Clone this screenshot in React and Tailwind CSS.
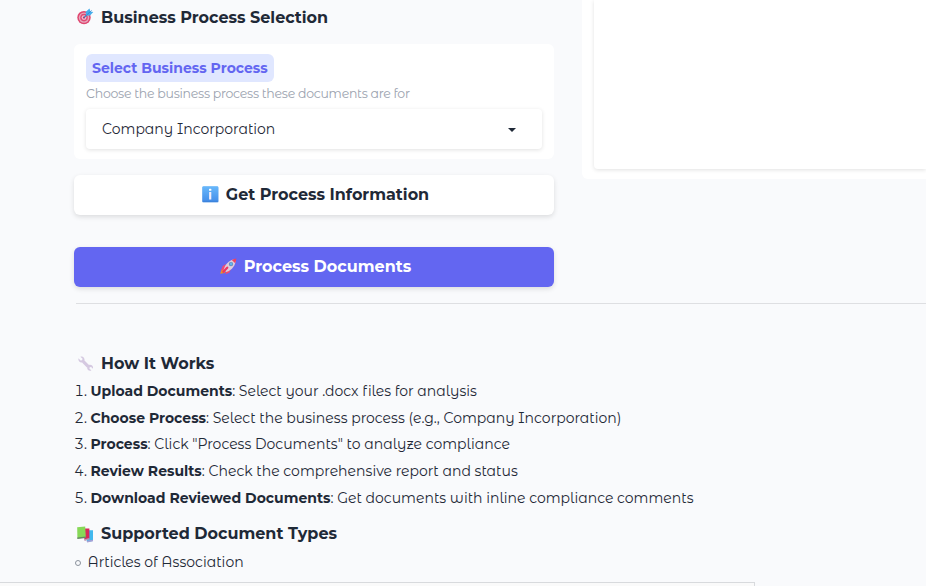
const Target = () => (
  <svg className="-mt-0.5 h-[17px] w-[17px] shrink-0" viewBox="0 0 17 17">
    <circle cx="7" cy="9.6" r="6.7" fill="#df4670" />
    <circle cx="7" cy="9.6" r="5.2" fill="#e6a9bd" />
    <circle cx="7" cy="9.6" r="3.8" fill="#df4b76" />
    <circle cx="7" cy="9.6" r="2.4" fill="#edbfd0" />
    <circle cx="7" cy="9.6" r="1.1" fill="#cc2c60" />
    <path d="M7 9.6L12.1 4.6" stroke="#307fbd" strokeWidth="1.2" />
    <path d="M9.1 7.6L8.6 3.9 12.5.6l.8 2.8 3 .7-3.3 3.5z" fill="#45adeb" />
    <path d="M9.6 7.1L14.6 2.4" stroke="#2b83cf" strokeWidth=".8" />
  </svg>
);

const Info = () => (
  <svg className="-mt-px h-[17px] w-[17px] shrink-0" viewBox="0 0 17 17">
    <defs>
      <linearGradient id="info" x2="0" y2="1">
        <stop stopColor="#68b8fb" />
        <stop offset="1" stopColor="#438de9" />
      </linearGradient>
    </defs>
    <rect x=".3" y=".5" width="16.2" height="16.2" rx="1.3" fill="#a6c9f2" />
    <rect x=".3" y=".3" width="16" height="15.6" rx="1.2" fill="url(#info)" />
    <path d="M.5 15.3h15.7" stroke="#397ed6" strokeWidth=".8" />
    <rect x="7" y="2.8" width="2.4" height="2" rx=".6" fill="#fff" />
    <rect x="7.1" y="6" width="2.2" height="7.6" rx=".3" fill="#f5eef9" />
  </svg>
);

const Rocket = () => (
  <svg className="-mt-px h-[17px] w-[17px] shrink-0" viewBox="0 0 17 17">
    <path d="M1.8 11.1L.2 15.8l4.6-.8 1.2-2.5-1.7-1.8z" fill="#f19020" />
    <path d="M6 6L2.7 7.9.9 12.4l4-1zM11 10.6l-1.4 3.8-4 1.8.5-4z" fill="#ef4a74" />
    <path d="M3.7 11.8C4.6 7.4 8 2 15.8.9 15.9 7 12.3 12 6.2 14.1z" fill="#dccddd" />
    <path d="M11.8 2c1.3-.7 3-1.1 4.5-1.4-.1 1.8-.5 3.4-1.1 4.6z" fill="#ef4060" />
    <circle cx="11" cy="6.1" r="2.2" fill="#6b89b4" />
    <circle cx="11.1" cy="6" r="1.4" fill="#5fb5f1" />
    <path d="M3.4 13.7l3.8-4" stroke="#ef3564" strokeWidth="2.3" strokeLinecap="round" />
  </svg>
);

const Wrench = () => (
  <svg className="-mt-px h-[17px] w-[17px] shrink-0" viewBox="0 0 17 17">
    <path d="M3.4 1.7l2.2 2.1-.5 1.4-1.5.3L1.4 3.2c-.5 2.8 1.7 4.9 4.2 4.1l4.6 4.5c-.5 2.9 1.7 4.6 4.2 3.8l-2-2 .3-1.3 1.4-.4 1.9 1.8c.6-2.6-1.6-4.4-4-3.8L7.5 5.5C8 2.7 5.7.8 3.4 1.7z" fill="#d5c9e1" />
    <path d="M5.8 6.8l5.1 5.1" stroke="#d5c9e1" strokeWidth="2.1" />
  </svg>
);

const Books = () => (
  <svg className="h-[17px] w-[17px] shrink-0" viewBox="0 0 17 17">
    <path d="M8 4.2h8v10.7l-6 1.2z" fill="#41b8ee" />
    <path d="M9.8 14.8l6.2-1v1.5l-5.9 1.2z" fill="#a7a0d5" />
    <path d="M5 2.5h7.4v10.3l-4.6 1.6z" fill="#d82759" />
    <path d="M7.2 13.3l5.2-1.2v1.3l-4.8 1.3z" fill="#b39bbb" />
    <path d="M.2 1.2L8.2.6l.6 10.8-8.4 1z" fill="#87d857" />
    <path d="M.3 11.6l8.4-1v1.5l-8.3 1z" fill="#668565" />
  </svg>
);

const steps = [
  ["Upload Documents", "Select your .docx files for analysis"],
  ["Choose Process", "Select the business process (e.g., Company Incorporation)"],
  ["Process", 'Click "Process Documents" to analyze compliance'],
  ["Review Results", "Check the comprehensive report and status"],
  ["Download Reviewed Documents", "Get documents with inline compliance comments"],
];

export default function App() {
  return (
    <div className="flex h-[586px] w-[926px] flex-col overflow-hidden whitespace-nowrap bg-[#f9fafc] font-['Montserrat','Inter',sans-serif] text-[#1f2937]">
      <div className="flex h-[287px] shrink-0 pl-[74px]">
        <main className="w-[480px]">
          <h2 className="flex h-[35px] items-center gap-[7px] pl-[3px] text-base font-bold"><Target />Business Process Selection</h2>
          <section className="mt-[9px] h-[115px] rounded-md bg-white px-3 pt-2.5">
            <div className="flex h-7 w-[188px] items-center rounded-md bg-[#e0e7ff] px-1.5 text-sm font-bold text-[#6366f1]">Select Business Process</div>
            <p className="h-[27px] pt-0.5 font-['Montserrat_Alternates','Montserrat',sans-serif] text-[12.5px] leading-5 tracking-[-0.27px] text-[#9ca3af]">Choose the business process these documents are for</p>
            <div className="flex h-10 w-[456px] items-center justify-between rounded bg-white pr-[26px] pl-4 font-['Montserrat_Alternates','Montserrat',sans-serif] text-sm shadow-[0_1px_4px_rgba(0,0,0,0.12)]">
              Company Incorporation
              <svg className="mt-0.5 h-1 w-2" viewBox="0 0 8 4"><path d="M0 0h8L4 4z" fill="#1f2937" /></svg>
            </div>
          </section>
          <button className="mt-4 flex h-10 w-full items-center justify-center gap-[7px] rounded-md bg-white pl-[3px] text-base font-bold shadow-[0_2px_5px_rgba(0,0,0,0.12)]"><Info />Get Process Information</button>
          <button className="mt-8 flex h-10 w-full items-center justify-center gap-[7px] rounded-md bg-[#6366f1] pl-[3px] text-base font-bold text-white shadow-[0_2px_5px_rgba(0,0,0,0.12)]"><Rocket />Process Documents</button>
        </main>
        <aside className="ml-7 h-[179px] flex-1 rounded-bl-md bg-white pl-3">
          <div className="h-[169px] rounded-bl shadow-[0_1px_4px_rgba(0,0,0,0.12)]" />
        </aside>
      </div>
      <hr className="mt-4 ml-[76px] border-[#dedfe2]" />
      <section className="pl-[74px] pt-12">
        <h2 className="flex h-6 items-center gap-[7px] pl-[3px] text-base font-bold"><Wrench />How It Works</h2>
        <ol className="h-[146px] pt-0.5 font-['Montserrat_Alternates','Montserrat',sans-serif] text-sm leading-[26.7px]">
          {steps.map(([name, description], index) => (
            <li key={name} className="flex">
              <span className="w-[16.5px] pr-[3.5px] text-right tabular-nums">{index + 1}.</span>
              <b className="font-['Montserrat',sans-serif] font-bold">{name}</b>
              <span>: {description}</span>
            </li>
          ))}
        </ol>
        <h2 className="flex h-6 items-center gap-[7px] pl-[3px] text-base font-bold"><Books />Supported Document Types</h2>
        <div className="flex h-8 items-center pl-[1px] font-['Montserrat_Alternates','Montserrat',sans-serif] text-sm"><span className="mt-px mr-[6.5px] h-1.5 w-1.5 rounded-full border border-[#8b929d]" />Articles of Association</div>
      </section>
      <div className="mt-auto h-1 w-[755px] shrink-0 border-t border-r border-[#d8dadd] bg-[#fafafa]" />
    </div>
  );
}
